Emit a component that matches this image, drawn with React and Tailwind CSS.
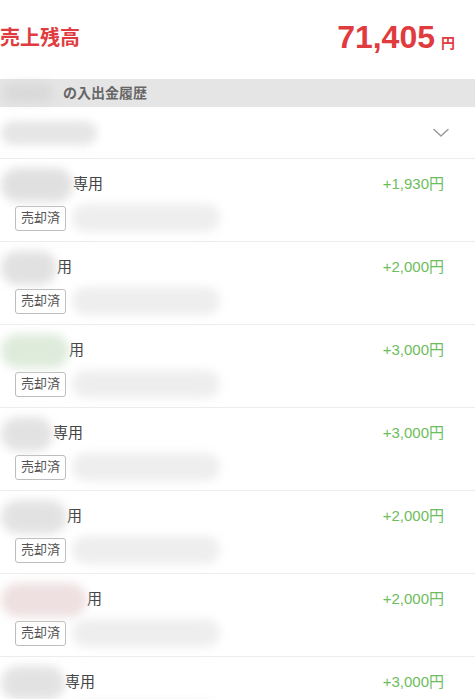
import React from "react";

const font = { fontFamily: '"Liberation Sans", "Noto Sans CJK JP", sans-serif' };

const rows = [
  { title: "専用", amount: "+1,930円", tint: "bg-[#d9d9d9]", w: "w-[72px]" },
  { title: "用", amount: "+2,000円", tint: "bg-[#dadada]", w: "w-[56px]" },
  { title: "用", amount: "+3,000円", tint: "bg-[#d6e6d2]", w: "w-[68px]" },
  { title: "専用", amount: "+3,000円", tint: "bg-[#dcdcdc]", w: "w-[52px]" },
  { title: "用", amount: "+2,000円", tint: "bg-[#dcdcdc]", w: "w-[66px]" },
  { title: "用", amount: "+2,000円", tint: "bg-[#ead8da]", w: "w-[86px]" },
  { title: "専用", amount: "+3,000円", tint: "bg-[#dcdcdc]", w: "w-[64px]" },
];

function Row({ r }) {
  return (
    <div className="h-[83px] border-b border-[#ececec] flex flex-col pl-[15px] pr-[31px]">
      <div className="flex items-center justify-between h-[50px] pt-[1px]">
        <div className="flex items-center">
          <div className={`${r.w} h-[34px] rounded-full ${r.tint} blur-[5px] -ml-[14px] opacity-80`} />
          <span className="text-[15px] text-[#444]">{r.title}</span>
        </div>
        <span className="text-[15px] text-[#6cbd5c]">{r.amount}</span>
      </div>
      <div className="flex items-center gap-[6px] -mt-[5px]">
        <span className="border border-[#bdbdbd] rounded-[3px] h-[25px] px-[5px] flex items-center text-[13px] text-[#555] bg-white">
          売却済
        </span>
        <div className="w-[148px] h-[28px] rounded-full bg-[#eeeeee] blur-[5px]" />
      </div>
    </div>
  );
}

export default function App() {
  return (
    <div className="w-[475px] h-[699px] bg-white overflow-hidden" style={font}>
      <div className="h-[79px] flex items-center justify-between pr-[20px] pb-[4px]">
        <span className="text-[20px] font-bold text-[#e03c40]">売上残高</span>
        <div className="flex items-baseline gap-[6px]">
          <span className="text-[32px] font-bold text-[#e03c40] leading-none">71,405</span>
          <span className="text-[14px] font-bold text-[#e03c40]">円</span>
        </div>
      </div>
      <div className="h-[28px] bg-[#e5e5e5] flex items-center">
        <div className="w-[52px] h-[20px] rounded-full bg-[#dadada] blur-[4px] ml-[2px]" />
        <span className="ml-[9px] text-[14px] font-bold text-[#666]">の入出金履歴</span>
      </div>
      <div className="h-[52px] border-b border-[#ececec] flex items-center justify-between pr-[26px]">
        <div className="w-[96px] h-[24px] rounded-full bg-[#e6e6e6] blur-[4px] ml-[1px]" />
        <svg width="16" height="10" viewBox="0 0 16 10" fill="none">
          <path d="M1 1.5 L8 8 L15 1.5" stroke="#9a9a9a" strokeWidth="1.5" strokeLinecap="round" strokeLinejoin="round" />
        </svg>
      </div>
      {rows.map((r, i) => (
        <Row key={i} r={r} />
      ))}
    </div>
  );
}
